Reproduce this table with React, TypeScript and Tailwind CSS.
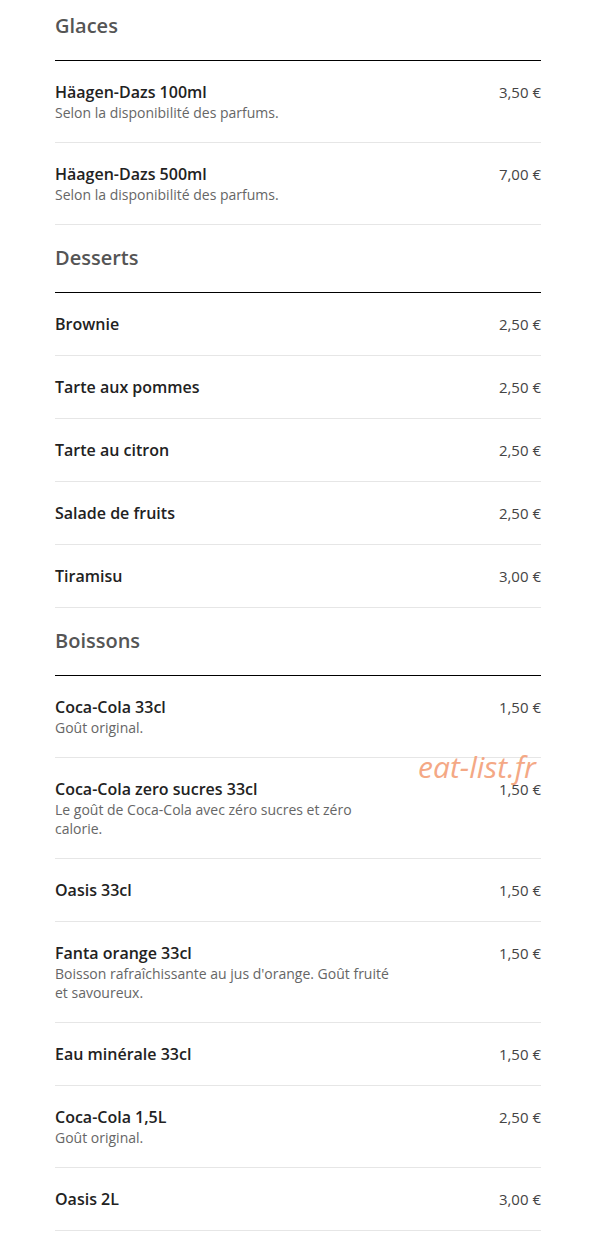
const sections = [
  {
    title: "Glaces",
    items: [
      { name: "Häagen-Dazs 100ml", desc: "Selon la disponibilité des parfums.", price: "3,50 €" },
      { name: "Häagen-Dazs 500ml", desc: "Selon la disponibilité des parfums.", price: "7,00 €" },
    ],
  },
  {
    title: "Desserts",
    items: [
      { name: "Brownie", price: "2,50 €" },
      { name: "Tarte aux pommes", price: "2,50 €" },
      { name: "Tarte au citron", price: "2,50 €" },
      { name: "Salade de fruits", price: "2,50 €" },
      { name: "Tiramisu", price: "3,00 €" },
    ],
  },
  {
    title: "Boissons",
    items: [
      { name: "Coca-Cola 33cl", desc: "Goût original.", price: "1,50 €" },
      {
        name: "Coca-Cola zero sucres 33cl",
        desc: "Le goût de Coca-Cola avec zéro sucres et zéro calorie.",
        price: "1,50 €",
      },
      { name: "Oasis 33cl", price: "1,50 €" },
      {
        name: "Fanta orange 33cl",
        desc: "Boisson rafraîchissante au jus d'orange. Goût fruité et savoureux.",
        price: "1,50 €",
      },
      { name: "Eau minérale 33cl", price: "1,50 €" },
      { name: "Coca-Cola 1,5L", desc: "Goût original.", price: "2,50 €" },
      { name: "Oasis 2L", price: "3,00 €" },
    ],
  },
];

type Item = { name: string; desc?: string; price: string };

function MenuItem({ name, desc, price }: Item) {
  return (
    <div className="flex justify-between border-b border-[#e6e6e6] py-5">
      <div className="w-[340px]">
        <p className="text-[16px] leading-[22px] font-semibold text-[#222]">{name}</p>
        {desc && <p className="text-[14px] leading-[19px] text-[#666]">{desc}</p>}
      </div>
      <span className="text-[15px] leading-[22px] text-[#444]">{price}</span>
    </div>
  );
}

export default function App() {
  return (
    <div
      className="relative min-h-[1253px] bg-white pt-3"
      style={{ fontFamily: '"Open Sans", "Noto Sans", sans-serif' }}
    >
      <div className="ml-[55px] w-[486px]">
        {sections.map((section, i) => (
          <section key={section.title} className={i > 0 ? "mt-[19px]" : ""}>
            <h2 className="border-b border-black pb-5 text-[20px] leading-[28px] font-semibold text-[#555]">
              {section.title}
            </h2>
            {section.items.map((item) => (
              <MenuItem key={item.name} {...item} />
            ))}
          </section>
        ))}
      </div>

      {/* watermark */}
      <span className="absolute left-[418px] top-[749px] text-[30px] leading-[36px] italic text-[#f4a885]">
        eat-list.fr
      </span>
    </div>
  );
}
